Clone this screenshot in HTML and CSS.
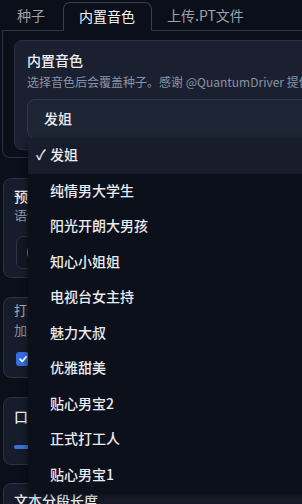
FILE: index.html
```html
<!DOCTYPE html>
<html lang="zh">
<head>
<meta charset="utf-8">
<link rel="stylesheet" href="styles.css">
</head>
<body>
<div class="page">
  <div class="tabs">
    <div class="tab-nav">
      <div class="tab">种子</div>
      <div class="tab active">内置音色</div>
      <div class="tab">上传.PT文件</div>
      <div class="tab-fill"></div>
    </div>
    <div class="tab-panel">
      <div class="block">
        <div class="title">内置音色</div>
        <div class="info">选择音色后会覆盖种子。感谢 @QuantumDriver 提供试听音频及音色数据</div>
        <div class="input">发姐</div>
      </div>
    </div>
  </div>

  <div class="card card-preset">
    <div class="label">预设模板</div>
    <div class="desc">语气参数设置</div>
    <div class="inner-input">(</div>
  </div>

  <div class="card card-check">
    <div class="desc light">打开后自动优化文本</div>
    <div class="desc">加入停顿标记</div>
    <div class="checkbox">
      <svg width="12" height="14" viewBox="0 0 12 14"><path d="M3 7.2 L5.2 9.4 L9.2 4.8" fill="none" stroke="#fff" stroke-width="1.8" stroke-linecap="round" stroke-linejoin="round"/></svg>
    </div>
  </div>

  <div class="card card-slider">
    <div class="label">口语化程度</div>
    <div class="slider"><div class="slider-fill"></div></div>
  </div>

  <div class="card card-last">
    <div class="label">文本分段长度</div>
  </div>

  <ul class="menu">
    <li class="item selected"><span class="check">✓</span>发姐</li>
    <li class="item"><span class="check"></span>纯情男大学生</li>
    <li class="item"><span class="check"></span>阳光开朗大男孩</li>
    <li class="item"><span class="check"></span>知心小姐姐</li>
    <li class="item"><span class="check"></span>电视台女主持</li>
    <li class="item"><span class="check"></span>魅力大叔</li>
    <li class="item"><span class="check"></span>优雅甜美</li>
    <li class="item"><span class="check"></span>贴心男宝2</li>
    <li class="item"><span class="check"></span>正式打工人</li>
    <li class="item"><span class="check"></span>贴心男宝1</li>
  </ul>
</div>
</body>
</html>
```

FILE: styles.css
```css
html, body {
  margin: 0;
  padding: 0;
  background: #0b0f19;
  overflow: hidden;
  width: 302px;
  height: 504px;
}
body {
  font-family: "Noto Sans CJK SC", "Noto Sans", sans-serif;
  color: #e5e7eb;
}
.page {
  position: relative;
  width: 640px;
  padding-left: 2px;
  box-sizing: border-box;
}
.tabs {
  display: flex;
  flex-direction: column;
}
.tab-nav {
  display: flex;
  height: 31px;
  align-items: flex-end;
}
.tab {
  height: 29px;
  box-sizing: border-box;
  padding: 0 16px 0 15px;
  font-size: 14px;
  line-height: 26px;
  color: #9ca3af;
  border-bottom: 1px solid #313949;
  white-space: nowrap;
}
.tab:first-child {
  padding-right: 18px;
}
.tab.active {
  color: #f3f4f6;
  border: 1px solid #373f4e;
  border-bottom: 1px solid transparent;
  border-radius: 7px 7px 0 0;
  padding: 0 16px 0 15px;
}
.tab-fill {
  flex: 1;
  height: 29px;
  border-bottom: 1px solid #313949;
}
.tab-panel {
  border: 1px solid #2b3342;
  border-top: none;
  border-radius: 0 0 8px 8px;
  padding: 9px 11px 9px 11px;
  height: 127px;
  box-sizing: border-box;
}
.block {
  background: #1a2030;
  border: 1px solid #283041;
  border-radius: 8px;
  padding: 10px 12px 10px 12px;
}
.title {
  font-size: 14px;
  line-height: 18px;
  color: #eceef2;
  font-weight: 500;
}
.info {
  margin-top: 5px;
  font-size: 12px;
  line-height: 16px;
  color: #8a93a3;
  white-space: nowrap;
  overflow: hidden;
}
.input {
  margin-top: 9px;
  height: 40px;
  box-sizing: border-box;
  background: #1e2534;
  border: 1px solid #30384a;
  border-radius: 8px;
  padding-left: 16px;
  font-size: 14px;
  line-height: 37px;
  color: #e8eaee;
  font-weight: 500;
}
.card {
  margin-left: 1px;
  background: #161c29;
  border: 1px solid #2a3243;
  border-radius: 8px;
  padding: 8px 10px;
  box-sizing: border-box;
}
.card-preset {
  margin-top: 20px;
  height: 100px;
}
.card-check {
  margin-top: 19px;
  height: 81px;
  padding-top: 2px;
}
.card-slider {
  margin-top: 19px;
  height: 68px;
  padding-top: 9px;
}
.card-last {
  margin-top: 18px;
  height: 40px;
  padding-top: 7px;
}
.label {
  font-size: 14px;
  line-height: 18px;
  color: #eceef2;
  font-weight: 500;
  white-space: nowrap;
}
.desc {
  font-size: 13px;
  line-height: 18px;
  color: #8a93a3;
  white-space: nowrap;
  margin-top: 1px;
}
.card-check .desc {
  line-height: 20px;
  margin-top: 0;
}
.desc.light {
  color: #a3abb9;
}
.inner-input {
  margin-top: 12px;
  margin-left: 2px;
  height: 33px;
  box-sizing: border-box;
  border: 1px solid #2c3444;
  border-radius: 7px;
  background: #121723;
  padding-left: 9px;
  font-size: 13px;
  line-height: 30px;
  color: #9ca3af;
}
.checkbox {
  margin-top: 12px;
  margin-left: 2px;
  width: 13px;
  height: 14px;
  border-radius: 3px;
  background: #2f6fe0;
  display: flex;
  align-items: center;
  justify-content: center;
}
.slider {
  margin-top: 20px;
  height: 4px;
  background: #374151;
  border-radius: 2px;
  width: 300px;
}
.slider-fill {
  width: 120px;
  height: 4px;
  border-radius: 2px;
  background: #3b6fd6;
}
.menu {
  position: absolute;
  left: 28px;
  top: 138px;
  width: 560px;
  margin: 0;
  padding: 0;
  list-style: none;
  background: #0c101a;
  box-shadow: 0 2px 6px rgba(0, 0, 0, 0.6);
  border-radius: 0 0 6px 6px;
}
.item {
  height: 35.5px;
  box-sizing: border-box;
  padding-bottom: 3px;
  display: flex;
  align-items: center;
  padding-left: 8px;
  font-size: 14px;
  font-weight: 500;
  color: #e9ebef;
  white-space: nowrap;
}
.item.selected {
  background: #181d2b;
}
.check {
  display: inline-block;
  width: 14px;
  font-size: 14px;
}
```
